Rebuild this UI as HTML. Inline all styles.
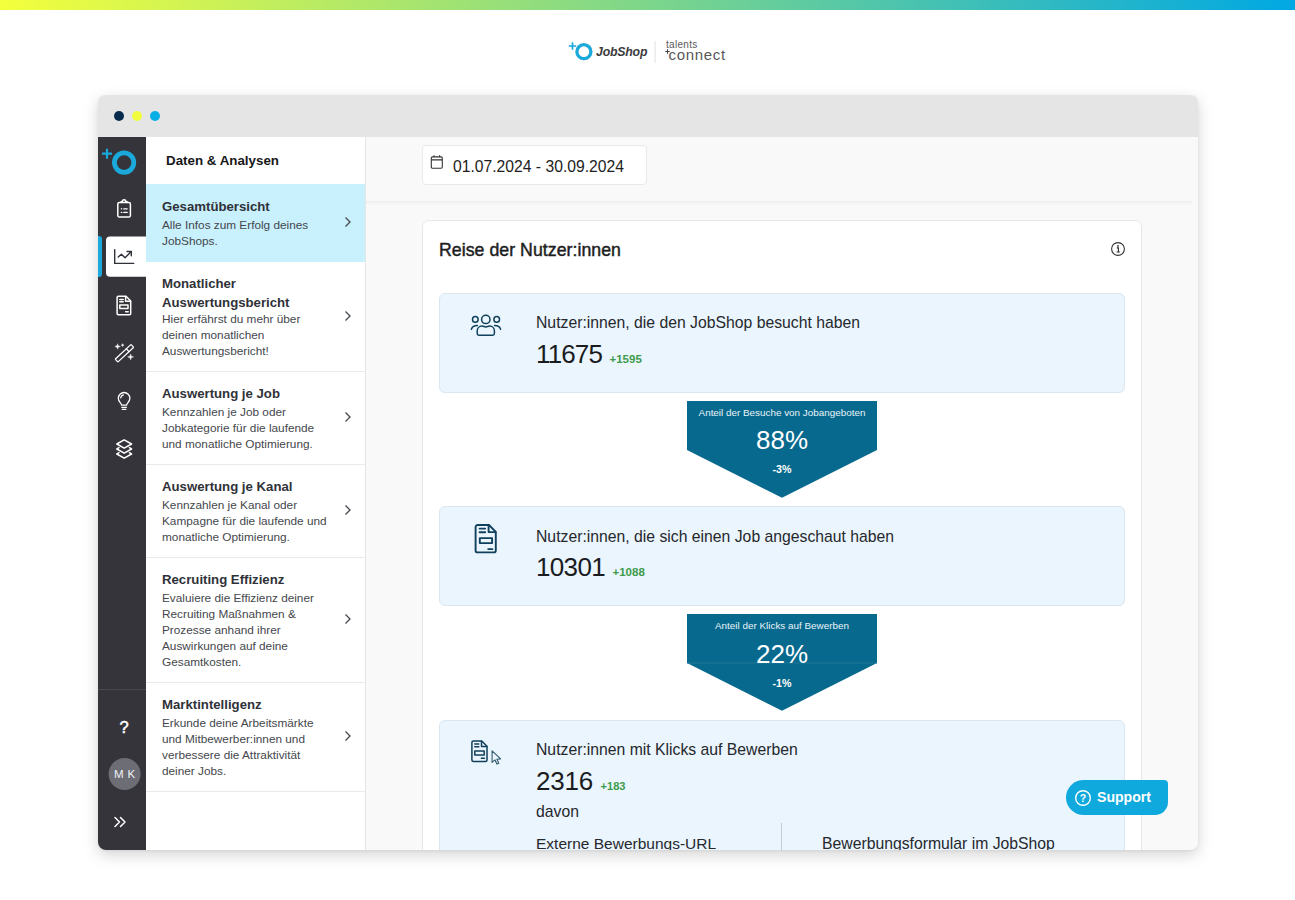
<!DOCTYPE html>
<html lang="de">
<head>
<meta charset="utf-8">
<title>JobShop – Daten &amp; Analysen</title>
<style>
*{box-sizing:border-box;margin:0;padding:0}
html,body{width:1295px;height:900px;overflow:hidden;background:#fff;font-family:"Liberation Sans",sans-serif;color:#222}
.abs{position:absolute}
.nw{white-space:nowrap}
#topbar{position:absolute;left:0;top:0;width:1295px;height:10px;background:linear-gradient(90deg,#f3ff3c 0%,#7dd68b 50%,#00a8e3 100%)}
#win{position:absolute;left:98px;top:95px;width:1100px;height:754.700px;border-radius:7px 7px 8px 8px;background:#f9f9f9;box-shadow:0 5px 15px rgba(0,0,0,.17),0 1px 3px rgba(0,0,0,.05);overflow:hidden}
#tbar{position:absolute;left:0;top:0;width:1100px;height:42px;background:#e5e5e5}
.dot{position:absolute;top:16px;width:10px;height:10px;border-radius:50%}
#side{position:absolute;left:0;top:42px;width:48px;height:720px;background:#34343a}
#nav{position:absolute;left:48px;top:42px;width:220px;height:720px;background:#fff;border-right:1px solid #e6e6e6}
.sep{position:absolute;left:0;width:219px;height:1px;background:#eaeaea}
.nt{position:absolute;left:16px;margin-top:0.400px;font-weight:bold;font-size:13.2px;line-height:18px;color:#2f3238;white-space:nowrap}
.nd{position:absolute;left:16px;font-size:11.8px;line-height:16px;color:#44474c;white-space:nowrap}
.chev{position:absolute;left:198px;width:8px;height:12px}
#main{position:absolute;left:268px;top:42px;width:832px;height:720px;background:#f9f9f9}
#sticky{position:absolute;left:0;top:0;width:826px;height:64px;background:#f9f9f9}
#sticky:after{content:"";position:absolute;left:0;top:63.800px;width:826px;height:5px;background:linear-gradient(180deg,rgba(0,0,0,.05) 0,rgba(0,0,0,.035) 30%,rgba(0,0,0,.012) 65%,rgba(0,0,0,0) 100%)}
#date{position:absolute;left:56px;top:8px;width:225px;height:40px;background:#fff;border:1px solid #e9e9e9;border-radius:4px}
#card{position:absolute;left:56px;top:83px;width:720px;height:700px;background:#fff;border:1px solid #e7e7e7;border-radius:7px}
.box{position:absolute;left:16px;width:686px;background:#eaf5fe;border:1px solid #dbe7f0;border-radius:6px}
.lbl{position:absolute;left:96px;margin-top:0.400px;font-size:15.75px;line-height:20px;color:#26282c;white-space:nowrap}
.num{position:absolute;left:96px;margin-top:0.100px;font-size:26px;line-height:30px;color:#1b1c1f;white-space:nowrap}
.dl{position:absolute;margin:-0.400px 0 0 -0.500px;font-size:11.5px;font-weight:bold;line-height:14px;color:#3f9b4c;white-space:nowrap}
.arrow{position:absolute;left:264px;width:190px;height:97px}
.at{position:absolute;left:0;width:190px;text-align:center;color:#fff;white-space:nowrap}
</style>
</head>
<body>
<div id="topbar"></div>

<!-- top logo -->
<svg class="abs" style="left:560px;top:36px" width="180" height="32" viewBox="0 0 180 32">
  <path d="M8.800 10h7.400M12.500 6.300v7.400" stroke="#1ba8da" stroke-width="1.700" fill="none"/>
  <circle cx="23.900" cy="15.700" r="7" fill="none" stroke="#1ba8da" stroke-width="3.300"/>
  
  <rect x="94.6" y="5" width="1" height="22" fill="#e2e2e2"/>
</svg>
<div class="abs nw" style="left:596px;top:44px;font-size:12.300px;line-height:16px;font-weight:bold;font-style:italic;color:#3b3b3d;letter-spacing:-0.2px">JobShop</div>
<div class="abs nw" style="left:666px;top:39px;font-size:10px;line-height:11px;color:#5a5a5c;letter-spacing:0.300px">talents</div>
<div class="abs nw" style="left:668.500px;top:46px;font-size:15px;line-height:18px;color:#58585a;letter-spacing:0.700px">connect</div>
<svg class="abs" style="left:665px;top:49px" width="5" height="5" viewBox="0 0 5 5"><path d="M0.300 2.500h4.400M2.500 0.300v4.400" stroke="#444" stroke-width="1.1"/></svg>

<div id="win">
  <div id="tbar">
    <div class="dot" style="left:16px;background:#062b4d"></div>
    <div class="dot" style="left:34px;background:#f1fd3c"></div>
    <div class="dot" style="left:52px;background:#0aaee6"></div>
  </div>

  <!-- dark sidebar -->
  <div id="side">
    <svg class="abs" style="left:0;top:0" width="48" height="712" viewBox="0 0 48 712" fill="none">
      <!-- logo -->
      <path d="M4 16.7h10M9 11.7v10" stroke="#1ba8da" stroke-width="2.2"/>
      <circle cx="26.1" cy="25.6" r="9.7" stroke="#1ba8da" stroke-width="4.8"/>
      <!-- clipboard -->
      <g stroke="#fff" stroke-width="1.5" stroke-linejoin="round" stroke-linecap="round">
        <rect x="19.8" y="65.4" width="12.6" height="14.6" rx="1.6"/>
        <path d="M23.200 65.400v-1h1.300a1.600 1.600 0 0 1 3.200 0h1.300v1" />
        <path d="M23.300 71.800h0.500M25.800 71.800h3.400M23.300 75.400h0.500M25.800 75.400h3.400" stroke-width="1.300"/>
      </g>
      <!-- active tab -->
      <path d="M0 99h1a3 3 0 0 1 3 3v35a3 3 0 0 1-3 3H0z" fill="#1ba8da"/>
      <path d="M48 99.600H12a4 4 0 0 0-4 4v32.200a4 4 0 0 0 4 4h36z" fill="#fff"/>
      <g stroke="#2f3238" stroke-width="1.4" stroke-linejoin="round" stroke-linecap="round">
        <path d="M16.7 112.6v13.8h19"/>
        <path d="M20.2 120l3.2-2.8 3.6 3.6 6-6"/>
        <path d="M29 114.5h4.3v4.3"/>
      </g>
      <!-- doc -->
      <g stroke="#fff" stroke-width="1.5" stroke-linejoin="round" stroke-linecap="round">
        <path d="M20.3 159.3h7.7l4.7 4.7v12.5a1.2 1.2 0 0 1-1.2 1.2h-11.2a1.2 1.2 0 0 1-1.2-1.2v-16a1.2 1.2 0 0 1 1.2-1.2z"/>
        <path d="M27.6 159.5v4.8h4.8"/>
        <path d="M21.8 162.4h3.4M21.8 164.8h3.4"/>
        <rect x="21.8" y="168" width="8.2" height="3.6"/>
        <path d="M27.6 174.8h2.6"/>
      </g>
      <!-- wand -->
      <g stroke="#fff" stroke-width="1.3" stroke-linejoin="round" stroke-linecap="round">
        <g transform="rotate(-43 26.4 216.2)"><rect x="15.600" y="214.300" width="21.600" height="3.900" rx="0.600"/><path d="M30.800 214.300v3.900"/></g>
      </g>
      <g fill="#fff">
        <path d="M19.600 206.800q0 2.700 2.700 2.700q-2.700 0-2.700 2.700q0-2.700-2.700-2.700q2.700 0 2.700-2.700z" stroke="#fff" stroke-width="0.500"/>
        <path d="M32.600 217q0 2.900 2.900 2.900q-2.900 0-2.900 2.900q0-2.900-2.900-2.900q2.900 0 2.900-2.900z" stroke="#fff" stroke-width="0.500"/>
        <path d="M24.600 206.600q0 1.500 1.500 1.500q-1.500 0-1.500 1.500q0-1.500-1.500-1.500q1.500 0 1.500-1.500z" stroke="#fff" stroke-width="0.400"/>
      </g>
      <!-- bulb -->
      <g stroke="#fff" stroke-width="1.3" stroke-linejoin="round" stroke-linecap="round">
        <path d="M23.600 268.200c0-2.200-3.300-3.400-3.300-6.900a5.800 5.800 0 0 1 11.600 0c0 3.500-3.300 4.700-3.300 6.900z"/>
        <path d="M23.800 270.300h4.600M24.300 272.300h3.600"/>
        <path d="M22.700 260.800a3.400 3.400 0 0 1 2.600-2.800"/>
      </g>
      <!-- layers -->
      <g stroke="#fff" stroke-width="1.500" stroke-linejoin="round" stroke-linecap="round">
        <path d="M26.200 302.800l7.400 4.200-7.400 4.200-7.400-4.200z"/>
        <path d="M21 310.700l-2.200 1.300 7.400 4.200 7.400-4.200-2.200-1.300"/>
        <path d="M21 315.700l-2.200 1.300 7.400 4.200 7.400-4.200-2.200-1.300"/>
      </g>
      <rect x="0" y="552" width="48" height="1" fill="#47474d"/>
      <!-- avatar -->
      <circle cx="26.6" cy="637" r="16" fill="#6d6d76"/>
      <!-- >> -->
      <g stroke="#fff" stroke-width="1.5" stroke-linejoin="round" stroke-linecap="round">
        <path d="M17 680.5l4.5 4.5-4.5 4.5M22.5 680.5l4.5 4.5-4.5 4.5"/>
      </g>
    </svg>
    <div class="abs nw" style="left:0;top:580px;width:52px;text-align:center;font-size:16.500px;font-weight:normal;-webkit-text-stroke:0.500px #fff;line-height:20px;color:#fff">?</div>
    <div class="abs nw" style="left:10.6px;top:630px;width:32px;text-align:center;font-size:11.5px;line-height:14px;color:#f2f2f4;word-spacing:0.500px">M K</div>
  </div>

  <!-- nav panel -->
  <div id="nav">
    <div class="abs nw" style="left:20px;top:15px;font-weight:bold;font-size:13.35px;line-height:18px;color:#17181a">Daten &amp; Analysen</div>
    <div class="abs" style="left:0;top:47px;width:219px;height:78px;background:#c8f0fd"></div>

    <div class="nt" style="top:61px">Gesamtübersicht</div>
    <div class="nd" style="top:80px">Alle Infos zum Erfolg deines<br>JobShops.</div>

    <div class="nt" style="top:137.700px;line-height:18.600px">Monatlicher<br>Auswertungsbericht</div>
    <div class="nd" style="top:174px">Hier erfährst du mehr über<br>deinen monatlichen<br>Auswertungsbericht!</div>
    <div class="sep" style="top:234px"></div>

    <div class="nt" style="top:248px">Auswertung je Job</div>
    <div class="nd" style="top:267px">Kennzahlen je Job oder<br>Jobkategorie für die laufende<br>und monatliche Optimierung.</div>
    <div class="sep" style="top:327px"></div>

    <div class="nt" style="top:341px">Auswertung je Kanal</div>
    <div class="nd" style="top:360px">Kennzahlen je Kanal oder<br>Kampagne für die laufende und<br>monatliche Optimierung.</div>
    <div class="sep" style="top:420px"></div>

    <div class="nt" style="top:434px">Recruiting Effizienz</div>
    <div class="nd" style="top:453px">Evaluiere die Effizienz deiner<br>Recruiting Maßnahmen &amp;<br>Prozesse anhand ihrer<br>Auswirkungen auf deine<br>Gesamtkosten.</div>
    <div class="sep" style="top:545px"></div>

    <div class="nt" style="top:559px">Marktintelligenz</div>
    <div class="nd" style="top:578px">Erkunde deine Arbeitsmärkte<br>und Mitbewerber:innen und<br>verbessere die Attraktivität<br>deiner Jobs.</div>
    <div class="sep" style="top:654px"></div>

    <svg class="chev" style="top:79px" viewBox="0 0 8 12"><path d="M1.5 1.5l4.5 4.5-4.5 4.5" stroke="#44474c" stroke-width="1.3" fill="none"/></svg>
    <svg class="chev" style="top:173px" viewBox="0 0 8 12"><path d="M1.5 1.5l4.5 4.5-4.5 4.5" stroke="#44474c" stroke-width="1.3" fill="none"/></svg>
    <svg class="chev" style="top:274px" viewBox="0 0 8 12"><path d="M1.5 1.5l4.5 4.5-4.5 4.5" stroke="#44474c" stroke-width="1.3" fill="none"/></svg>
    <svg class="chev" style="top:367px" viewBox="0 0 8 12"><path d="M1.5 1.5l4.5 4.5-4.5 4.5" stroke="#44474c" stroke-width="1.3" fill="none"/></svg>
    <svg class="chev" style="top:476px" viewBox="0 0 8 12"><path d="M1.5 1.5l4.5 4.5-4.5 4.5" stroke="#44474c" stroke-width="1.3" fill="none"/></svg>
    <svg class="chev" style="top:593px" viewBox="0 0 8 12"><path d="M1.5 1.5l4.5 4.5-4.5 4.5" stroke="#44474c" stroke-width="1.3" fill="none"/></svg>
  </div>

  <!-- main -->
  <div id="main">
    <div id="card">
      <div class="abs nw" style="left:16px;top:17.500px;font-size:17.700px;font-weight:normal;-webkit-text-stroke:0.450px #1d1e21;line-height:22px;color:#1d1e21;letter-spacing:0.050px">Reise der Nutzer:innen</div>
      <svg class="abs" style="left:687px;top:20px" width="16" height="16" viewBox="0 0 16 16" fill="none"><circle cx="8" cy="8" r="6.400" stroke="#333335" stroke-width="1.100"/><path d="M6.8 6.9h1.6v4M6.6 11h3.2" stroke="#2a2a2c" stroke-width="1.1"/><circle cx="8" cy="4.9" r="0.85" fill="#2a2a2c"/></svg>

      <!-- box 1 -->
      <div class="box" style="top:72px;height:100px">
        <svg class="abs" style="left:29.200px;top:18px" width="34" height="26" viewBox="0 0 34 26" fill="none" stroke="#10405b" stroke-width="1.5" stroke-linecap="round" stroke-linejoin="round">
          <circle cx="16.8" cy="7.4" r="4.2"/>
          <circle cx="6.3" cy="7.4" r="2.8"/>
          <circle cx="27.7" cy="7.4" r="2.8"/>
          <path d="M8.2 21.5v-2.6a4.8 4.8 0 0 1 4.8-4.8c1.4 0 2.4 0.8 3.8 0.8s2.4-0.8 3.8-0.8a4.8 4.8 0 0 1 4.8 4.8v2.6a1.7 1.7 0 0 1-1.7 1.7h-13.8a1.7 1.7 0 0 1-1.700-1.700z"/>
          <path d="M2.400 17.200c0.800-2.400 2.800-3.600 6-3.600"/>
          <path d="M31.600 17.200c-0.800-2.400-2.800-3.600-6-3.600"/>
        </svg>
        <div class="lbl" style="top:19px">Nutzer:innen, die den JobShop besucht haben</div>
        <div class="num" style="top:45px;letter-spacing:-0.88px">11675</div>
        <div class="dl" style="left:170px;top:58px">+1595</div>
      </div>

      <!-- arrow 1 -->
      <div class="arrow" style="top:180px">
        <svg class="abs" style="left:0;top:0" width="190" height="97" viewBox="0 0 190 97"><path d="M0 0h190v49l-95 47.700L0 49z" fill="#08698e"/></svg>
        <div class="at" style="top:5px;font-size:9.9px;line-height:13px;color:#e9f4f8">Anteil der Besuche von Jobangeboten</div>
        <div class="at" style="top:24.300px;font-size:26px;line-height:30px">88%</div>
        <div class="at" style="top:62.300px;font-size:10.7px;line-height:13px;font-weight:bold">-3%</div>
      </div>

      <!-- box 2 -->
      <div class="box" style="top:285.400px;height:100px">
        <svg class="abs" style="left:33.200px;top:14.600px" width="26" height="34" viewBox="0 0 26 34" fill="none" stroke="#10405b" stroke-width="1.9" stroke-linecap="round" stroke-linejoin="round">
          <path d="M4.600 3h11.400l6.800 6.800v18.600a2 2 0 0 1-2 2h-16.200a2 2 0 0 1-2-2v-23.400a2 2 0 0 1 2-2z"/>
          <path d="M15.600 3.300v6.800h6.900"/>
          <path d="M6.600 6.600h5.600M6.600 10.300h5.600"/>
          <rect x="6.800" y="16.100" width="12.300" height="5"/>
          <path d="M15.200 27.100h4.200"/>
        </svg>
        <div class="lbl" style="top:19px">Nutzer:innen, die sich einen Job angeschaut haben</div>
        <div class="num" style="top:45px;letter-spacing:-0.66px">10301</div>
        <div class="dl" style="left:173px;top:58px">+1088</div>
      </div>

      <!-- arrow 2 -->
      <div class="arrow" style="top:393.400px">
        <svg class="abs" style="left:0;top:0" width="190" height="97" viewBox="0 0 190 97"><path d="M0 0h190v49l-95 47.700L0 49z" fill="#08698e"/><rect x="0" y="48.600" width="190" height="0.800" fill="#2a7d9d"/></svg>
        <div class="at" style="top:5px;font-size:9.9px;line-height:13px;color:#e9f4f8">Anteil der Klicks auf Bewerben</div>
        <div class="at" style="top:24.300px;font-size:26px;line-height:30px">22%</div>
        <div class="at" style="top:62.300px;font-size:10.7px;line-height:13px;font-weight:bold">-1%</div>
      </div>

      <!-- box 3 -->
      <div class="box" style="top:499px;height:180px">
        <svg class="abs" style="left:29px;top:17px" width="36" height="30" viewBox="0 0 36 30" fill="none" stroke="#10405b" stroke-width="1.500" stroke-linecap="round" stroke-linejoin="round">
          <path d="M4.400 3h8.400l5.200 5.200v13.800a1.500 1.500 0 0 1-1.500 1.500h-12.100a1.500 1.500 0 0 1-1.500-1.500v-17.500a1.500 1.500 0 0 1 1.500-1.500z"/>
          <path d="M12.500 3.200v5.300h5.300"/>
          <path d="M5.800 6h4M5.800 8.800h4"/>
          <rect x="5.800" y="13" width="9.400" height="4"/>
          <path d="M12.400 20.300h3"/>
          <path d="M23.100 12.800v11.600l2.900-2.500 1.900 4.200 1.900-0.900-1.900-4 3.700-0.300z" stroke="#345a6e" stroke-width="1.100"/>
        </svg>
        <div class="lbl" style="top:19px">Nutzer:innen mit Klicks auf Bewerben</div>
        <div class="num" style="top:45px;letter-spacing:-0.2px">2316</div>
        <div class="dl" style="left:161px;top:58px;font-size:11.1px">+183</div>
        <div class="lbl" style="top:81px">davon</div>
        <div class="lbl" style="top:112.600px;font-size:15.500px">Externe Bewerbungs-URL</div>
        <div class="abs" style="left:341px;top:102px;width:1px;height:80px;background:#c4ced6"></div>
        <div class="lbl" style="left:382px;top:112.600px">Bewerbungsformular im JobShop</div>
      </div>
    </div>

    <div id="sticky">
      <div id="date">
        <svg class="abs" style="left:6px;top:8.300px" width="16" height="16" viewBox="0 0 16 16" fill="none" stroke="#333" stroke-width="1.100" stroke-linejoin="round"><rect x="2.300" y="2.900" width="11" height="11.400" rx="1.200"/><path d="M2.300 5.900h11M5 1.300v1.800M10.600 1.300v1.800"/></svg>
        <div class="abs nw" style="left:30px;top:10.700px;font-size:15.7px;line-height:20px;color:#1d1e21">01.07.2024 - 30.09.2024</div>
      </div>
    </div>

    <!-- support -->
    <div class="abs" style="left:700px;top:643px;width:102px;height:35px;background:#10a9dd;border-radius:17.500px 4px 13px 17.500px">
      <svg class="abs" style="left:8px;top:9px" width="18" height="18" viewBox="0 0 18 18" fill="none"><circle cx="9" cy="9" r="7.300" stroke="#fff" stroke-width="1.400"/></svg>
      <div class="abs nw" style="left:8px;top:9px;width:18px;text-align:center;font-size:10.500px;font-weight:bold;line-height:18px;color:#fff">?</div>
      <div class="abs nw" style="left:31px;top:8px;font-size:14.100px;font-weight:bold;line-height:18px;color:#fff">Support</div>
    </div>
  </div>
</div>
</body>
</html>
